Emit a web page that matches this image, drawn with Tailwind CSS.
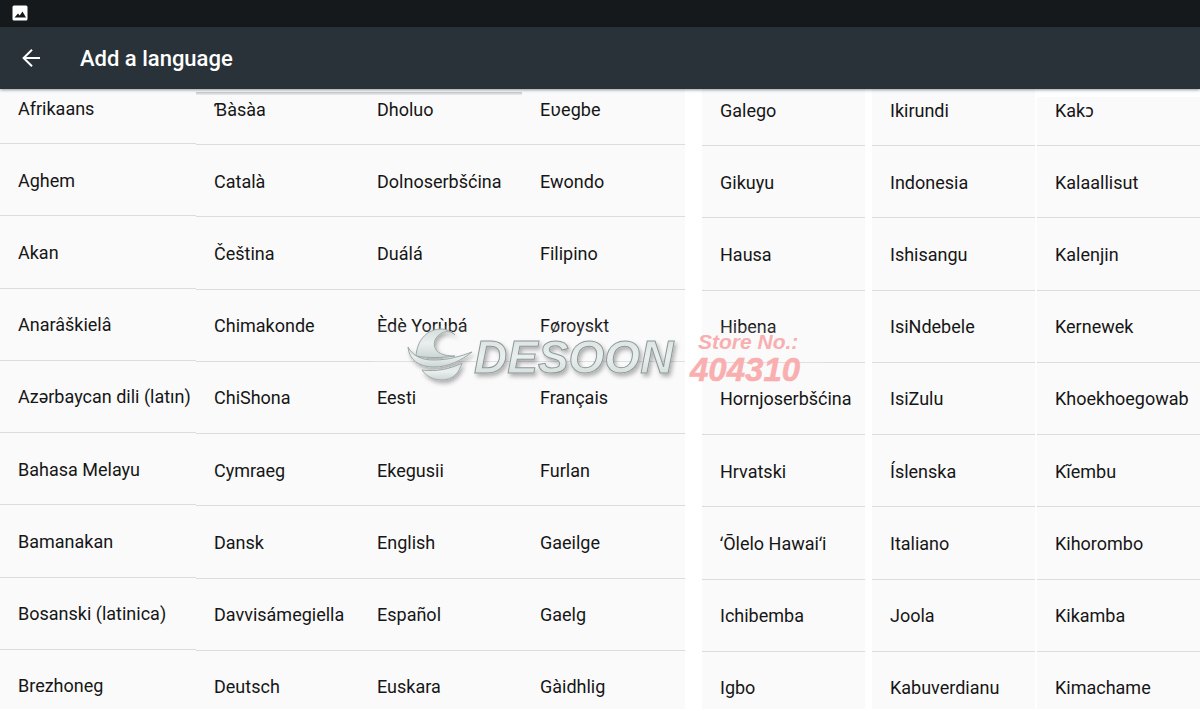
<!DOCTYPE html>
<html lang="en">
<head>
    <meta charset="UTF-8">
    <meta name="viewport" content="width=device-width, initial-scale=1.0">
    <title>Add a language</title>
    <script src="https://cdn.jsdelivr.net/npm/@tailwindcss/browser@4"></script>
</head>
<body class="relative flex flex-col h-screen overflow-hidden bg-white font-['Roboto','Noto_Sans',sans-serif] text-[#161616]">
    <!-- Status bar -->
    <div class="relative z-20 flex items-center h-[27px] shrink-0 px-3 pb-px bg-[#15191c]">
        <svg class="w-4 h-4" viewBox="0 0 16 16" aria-hidden="true">
            <rect x="0.5" y="0.5" width="15" height="15" rx="1.5" fill="#fff"/>
            <path d="M2.500 12.500 6 8.500l1.700 2 2.800-4 3.500 6z" fill="#15191c"/>
        </svg>
    </div>

    <!-- App bar -->
    <header class="relative z-20 flex items-center h-[62px] shrink-0 px-5 bg-[#2a3239] shadow-[0_1px_3px_rgba(0,0,0,0.4)]">
        <button type="button" aria-label="Back" class="w-6 h-6 text-white">
            <svg class="w-6 h-6" viewBox="0 0 24 24" fill="none" stroke="currentColor" stroke-width="2" aria-hidden="true">
                <path d="M20 12H3.800M12 3.800 3.600 12l8.400 8.200"/>
            </svg>
        </button>
        <h1 class="ml-9 pt-0.5 text-[22px] leading-8 font-medium text-white">Add a language</h1>
    </header>

    <!-- Language columns, scrolled a little past the first row -->
    <main id="languages" class="flex flex-1 min-h-0 -mt-[17px] -mb-[11px]"></main>

    <!-- Edge of the page -->
    <div class="absolute inset-x-0 bottom-0 h-0.5 bg-white"></div>

    <!-- Watermark -->
    <svg class="absolute left-[31%] top-[326px] w-[453px] h-[66px] pointer-events-none" viewBox="0 0 453 66">
        <defs>
            <linearGradient id="metal" x1="0" y1="0" x2="0" y2="1">
                <stop offset="0" stop-color="#d5dddb"/>
                <stop offset="0.5" stop-color="#e9efee"/>
                <stop offset="1" stop-color="#cdd6d4"/>
            </linearGradient>
            <filter id="drop" x="-10%" y="-20%" width="120%" height="150%">
                <feDropShadow dx="2" dy="3" stdDeviation="2" flood-color="#000" flood-opacity="0.3"/>
            </filter>
        </defs>
        <rect width="453" height="60" fill="#fff" fill-opacity="0.12"/>
        <g filter="url(#drop)" stroke="#9aa8a5" stroke-width="1" fill="url(#metal)">
            <g transform="translate(28 -6)">
                <path d="M16 36C17 22 25 10 40 9c6 0 11 2 15 6-4-4-9-4-13-2-8 4-10 12-5 18 4 4 11 5 18 5-13 2-27 2-39 0z"/>
                <path d="M8 27c5 9 13 13 26 13 15 0 27-4 38-8-10 8-23 15-38 15C19 47 9 40 8 27z"/>
                <path d="M22 50c14 2 28-1 40-7-3 10-9 17-20 17-9 0-16-4-20-10z"/>
            </g>
            <g font-family="'Liberation Sans', Arial, sans-serif" font-size="46" font-weight="700" font-style="italic">
                <text x="102" y="47" stroke="#8b9996" stroke-width="1">DESOON</text>
            </g>
        </g>
        <g font-family="'Liberation Sans Narrow', 'Liberation Sans', Arial, sans-serif" font-weight="700" font-style="italic" fill="#f9aeb0">
            <text x="326" y="23" font-size="21">Store No.:</text>
            <text x="318" y="55" font-size="33" stroke="#f9aeb0" stroke-width="0.500">404310</text>
        </g>
    </svg>

    <script>
        const columns = [
            {
                style: 'flex-[196_1_0%]',
                names: ['Afrikaans', 'Aghem', 'Akan', 'Anarâškielâ', 'Azərbaycan dili (latın)', 'Bahasa Melayu', 'Bamanakan', 'Bosanski (latinica)', 'Brezhoneg']
            },
            {
                style: 'flex-[163_1_0%] pt-px -mb-px',
                edge: true,
                names: ['Ɓàsàa', 'Català', 'Čeština', 'Chimakonde', 'ChiShona', 'Cymraeg', 'Dansk', 'Davvisámegiella', 'Deutsch']
            },
            {
                style: 'flex-[163_1_0%] pt-px -mb-px',
                edge: true,
                names: ['Dholuo', 'Dolnoserbšćina', 'Duálá', 'Èdè Yorùbá', 'Eesti', 'Ekegusii', 'English', 'Español', 'Euskara']
            },
            {
                style: 'flex-[163_1_0%] pt-px -mb-px',
                names: ['Eʋegbe', 'Ewondo', 'Filipino', 'Føroyskt', 'Français', 'Furlan', 'Gaeilge', 'Gaelg', 'Gàidhlig']
            },
            {
                style: 'flex-[163_1_0%] pt-0.5 -mb-0.5 ml-[17px]',
                names: ['Galego', 'Gikuyu', 'Hausa', 'Hibena', 'Hornjoserbšćina', 'Hrvatski', 'ʻŌlelo Hawaiʻi', 'Ichibemba', 'Igbo']
            },
            {
                style: 'flex-[163_1_0%] pt-0.5 -mb-0.5 ml-[7px]',
                names: ['Ikirundi', 'Indonesia', 'Ishisangu', 'IsiNdebele', 'IsiZulu', 'Íslenska', 'Italiano', 'Joola', 'Kabuverdianu']
            },
            {
                style: 'flex-[163_1_0%] pt-0.5 -mb-0.5 ml-0.5',
                gap: true,
                names: ['Kakɔ', 'Kalaallisut', 'Kalenjin', 'Kernewek', 'Khoekhoegowab', 'Kĩembu', 'Kihorombo', 'Kikamba', 'Kimachame']
            }
        ];

        const languages = document.getElementById('languages');

        function addStrip(list, className) {
            const strip = document.createElement('div');
            strip.className = className;
            list.appendChild(strip);
        }

        columns.forEach(column => {
            const list = document.createElement('ul');
            list.className = 'relative flex flex-col min-w-0 bg-[#fafafa] ' + column.style;

            column.names.forEach(name => {
                const item = document.createElement('li');
                item.className = 'flex flex-1 min-h-0 border-b border-[#dcdcdc]';
                const button = document.createElement('button');
                button.type = 'button';
                button.className = 'w-full pt-0.5 pl-[18px] text-left text-[18px] leading-6 whitespace-nowrap';
                button.textContent = name;
                item.appendChild(button);
                list.appendChild(item);
            });

            // Shadow line under the app bar
            if (column.edge) {
                addStrip(list, 'absolute inset-x-0 top-5 h-[3px] bg-linear-to-b from-[#c6c6c6] to-[#ececec]');
            }
            // White strip above the last column
            if (column.gap) {
                addStrip(list, 'absolute inset-x-0 top-[17px] h-2 bg-white');
            }

            languages.appendChild(list);
        });
    </script>
</body>
</html>
